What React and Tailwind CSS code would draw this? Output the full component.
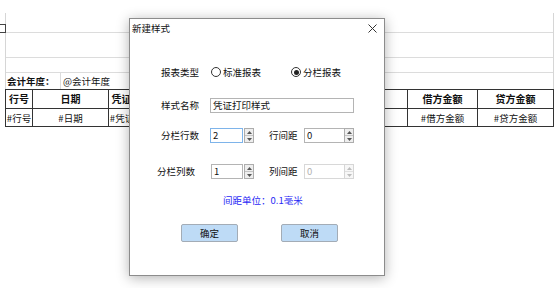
import React from "react";

const font = "font-['Noto_Sans_CJK_SC','Noto_Sans',sans-serif]";

const Spin = ({ disabled }) => (
  <div className={`w-[10px] h-[15px] flex flex-col border ${disabled ? "border-[#d6d6d6] bg-[#f7f7f7]" : "border-[#adadad] bg-[#eeeeee]"}`}>
    <div className={`flex-1 flex items-center justify-center border-b ${disabled ? "border-[#e0e0e0]" : "border-[#c4c4c4]"}`}>
      <svg width="5" height="3" viewBox="0 0 5 3"><path d="M0 3 L2.5 0 L5 3 Z" fill={disabled ? "#bdbdbd" : "#555"} /></svg>
    </div>
    <div className="flex-1 flex items-center justify-center">
      <svg width="5" height="3" viewBox="0 0 5 3"><path d="M0 0 L2.5 3 L5 0 Z" fill={disabled ? "#bdbdbd" : "#555"} /></svg>
    </div>
  </div>
);

const Radio = ({ checked, label }) => (
  <div className="flex items-center gap-[2px]">
    <div className="w-[10px] h-[10px] rounded-full border border-[#333] bg-white flex items-center justify-center">
      {checked && <div className="w-[5px] h-[5px] rounded-full bg-[#222]" />}
    </div>
    <span>{label}</span>
  </div>
);

const Dialog = () => (
  <div className={`absolute left-[129px] top-[18px] w-[256px] h-[258px] bg-white border border-[#8c8c8c] shadow-[0_2px_12px_rgba(0,0,0,0.3)] text-[9.5px] leading-[11px] text-[#111] ${font}`}>
    <div className="h-[19px] flex items-center justify-between pl-[2px] pr-[7px]">
      <span>新建样式</span>
      <svg width="9" height="9" viewBox="0 0 9 9"><path d="M0.5 0.5 L8.5 8.5 M8.5 0.5 L0.5 8.5" stroke="#333" strokeWidth="1" /></svg>
    </div>

    <div className="mt-[27px] h-[14px] pl-[31px] flex items-center">
      <span className="w-[50px]">报表类型</span>
      <div className="w-[80px]"><Radio label="标准报表" /></div>
      <Radio checked label="分栏报表" />
    </div>

    <div className="mt-[19px] h-[15px] pl-[31px] flex items-center">
      <span className="w-[49px]">样式名称</span>
      <div className="w-[144px] h-[15px] border border-[#b4b4b4] flex items-center pl-[2px]">凭证打印样式</div>
    </div>

    <div className="mt-[15px] h-[15px] pl-[31px] flex items-center">
      <span className="w-[49px]">分栏行数</span>
      <div className="w-[33px] h-[15px] border border-[#7eb4ea] flex items-center pl-[2px]">2</div>
      <div className="ml-[1px]"><Spin /></div>
      <span className="ml-[15px] w-[35px]">行间距</span>
      <div className="flex border border-[#b4b4b4]">
        <div className="w-[39px] h-[13px] flex items-center pl-[2px]">0</div>
        <div className="-my-[1px] -mr-[1px]"><Spin /></div>
      </div>
    </div>

    <div className="mt-[21px] h-[15px] pl-[27px] flex items-center">
      <span className="w-[54px]">分栏列数</span>
      <div className="w-[32px] h-[15px] border border-[#b4b4b4] flex items-center pl-[2px]">1</div>
      <div className="ml-[1px]"><Spin /></div>
      <span className="ml-[15px] w-[35px]">列间距</span>
      <div className="flex border border-[#d8d8d8]">
        <div className="w-[39px] h-[13px] flex items-center pl-[2px] text-[#b0b0b0]">0</div>
        <div className="-my-[1px] -mr-[1px]"><Spin disabled /></div>
      </div>
    </div>

    <div className="mt-[14px] h-[14px] pl-[93px] flex items-center text-[#2a2af5]">间距单位：0.1毫米</div>

    <div className="mt-[17px] pl-[51px] flex gap-[43px]">
      <button className="w-[57px] h-[18px] rounded-[2px] border border-[#a3acb6] bg-[#bedbf6] flex items-center justify-center">确定</button>
      <button className="w-[57px] h-[18px] rounded-[2px] border border-[#a3acb6] bg-[#bedbf6] flex items-center justify-center">取消</button>
    </div>
  </div>
);

// columns hidden behind the dialog are left empty
const cols = [
  { w: "w-[27px]", head: "行号", val: "#行号" },
  { w: "w-[76px]", head: "日期", val: "#日期" },
  { w: "w-[46px]", head: "凭证字号", val: "#凭证字号" },
  { w: "w-[150px]", head: "", val: "" },
  { w: "w-[103px]", head: "", val: "" },
  { w: "w-[70px]", head: "借方金额", val: "#借方金额" },
  { w: "w-[76px]", head: "贷方金额", val: "#贷方金额" },
];

export default function App() {
  return (
    <div className={`relative w-[554px] h-[288px] bg-white overflow-hidden text-[#111] leading-[12px] ${font}`}>
      <div className="absolute left-0 top-[24px] w-[6px] h-[9px] border-t border-r border-b border-[#444]" />
      <div className="pt-[13px] pl-[5px]">
        <div className="w-[549px] border-x border-[#d6d6d6]">
          <div className="h-[20px] border-b border-[#dcdcdc]" />
          <div className="h-[25px] border-b border-[#dcdcdc]" />
          <div className="h-[15px] border-b border-[#dcdcdc]" />
          <div className="h-[16px] flex items-center text-[9.5px]">
            <div className="w-[55px] h-full border-r border-[#dcdcdc] flex items-center pl-[1px] font-bold">会计年度：</div>
            <div className="pl-[2px]">@会计年度</div>
          </div>
        </div>
        <div className="w-[549px] border-t border-l border-[#333]">
          <div className="h-[19px] flex border-b border-[#333] text-[10px] font-bold">
            {cols.map((c, i) => (
              <div key={i} className={`${c.w} shrink-0 border-r border-[#333] flex items-center justify-center overflow-hidden whitespace-nowrap`}>{c.head}</div>
            ))}
          </div>
          <div className="h-[18px] flex border-b border-[#333] text-[9.5px]">
            {cols.map((c, i) => (
              <div key={i} className={`${c.w} shrink-0 border-r border-[#333] flex items-center justify-center overflow-hidden whitespace-nowrap`}>{c.val}</div>
            ))}
          </div>
        </div>
      </div>
      <Dialog />
    </div>
  );
}
